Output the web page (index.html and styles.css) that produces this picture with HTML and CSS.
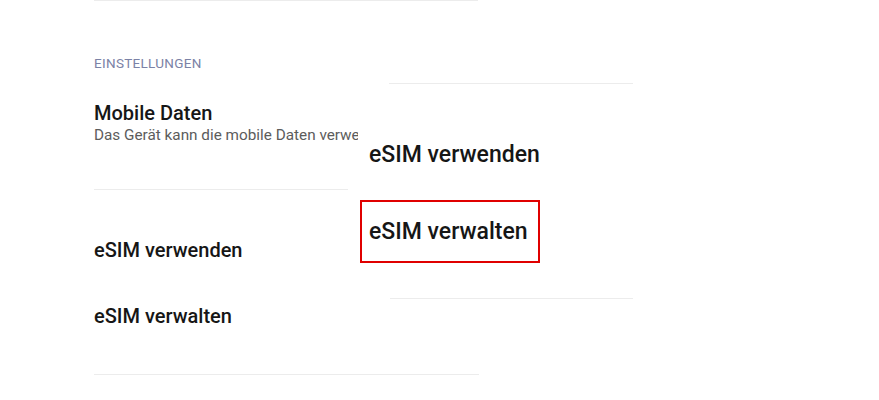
FILE: index.html
```html
<!DOCTYPE html>
<html lang="de">
<head>
<meta charset="utf-8">
<title>Einstellungen</title>
<link rel="stylesheet" href="styles.css">
</head>
<body>
<div class="page">
  <div class="list">
    <div class="divider divider-top"></div>
    <div class="section-header">EINSTELLUNGEN</div>
    <div class="pref">
      <div class="pref-title">Mobile Daten</div>
      <div class="pref-summary">Das Gerät kann die mobile Daten verwenden</div>
    </div>
    <div class="divider divider-short"></div>
    <div class="pref-title row-first">eSIM verwenden</div>
    <div class="pref-title row-second">eSIM verwalten</div>
    <div class="divider divider-bottom"></div>
  </div>
  <div class="callout">
    <div class="divider callout-line-top"></div>
    <div class="callout-title callout-first">eSIM verwenden</div>
    <div class="highlight"><div class="callout-title">eSIM verwalten</div></div>
    <div class="divider callout-line-bottom"></div>
  </div>
</div>
</body>
</html>
```
FILE: styles.css
```css
html, body {
  margin: 0;
  padding: 0;
  background: #ffffff;
}
body {
  font-family: Roboto, "Noto Sans", "Liberation Sans", sans-serif;
  color: #161616;
  width: 879px;
  height: 400px;
  overflow: hidden;
}
.page {
  position: relative;
  width: 879px;
  height: 400px;
}
.list {
  display: flex;
  flex-direction: column;
  padding-left: 94px;
}
.divider {
  height: 1px;
  background: #ececec;
}
.divider-top {
  width: 384px;
}
.section-header {
  margin-top: 54px;
  font-size: 13.5px;
  line-height: 16px;
  color: #7b82a6;
  letter-spacing: 0.3px;
}
.pref {
  margin-top: 30px;
  display: flex;
  flex-direction: column;
}
.pref-title {
  font-size: 20px;
  line-height: 24px;
  font-weight: 500;
  white-space: nowrap;
}
.pref-summary {
  font-size: 15.3px;
  line-height: 20px;
  color: #5c5c5c;
  white-space: nowrap;
}
.divider-short {
  margin-top: 44px;
  width: 254px;
}
.row-first {
  margin-top: 48px;
}
.row-second {
  margin-top: 42px;
}
.divider-bottom {
  margin-top: 46px;
  width: 385px;
}
.callout {
  position: absolute;
  left: 358px;
  top: 70px;
  width: 290px;
  height: 240px;
  background: #ffffff;
  display: flex;
  flex-direction: column;
  align-items: flex-start;
}
.callout-line-top {
  margin-top: 13px;
  margin-left: 31px;
  width: 244px;
}
.callout-title {
  font-size: 23px;
  line-height: 28px;
  font-weight: 500;
  white-space: nowrap;
}
.callout-first {
  margin-top: 57px;
  margin-left: 11px;
}
.highlight {
  box-sizing: border-box;
  margin-top: 31px;
  margin-left: 2px;
  width: 180px;
  height: 63px;
  border: 2px solid #e00000;
  padding: 16px 0 0 7px;
}
.callout-line-bottom {
  margin-top: 35px;
  margin-left: 32px;
  width: 243px;
}
```
